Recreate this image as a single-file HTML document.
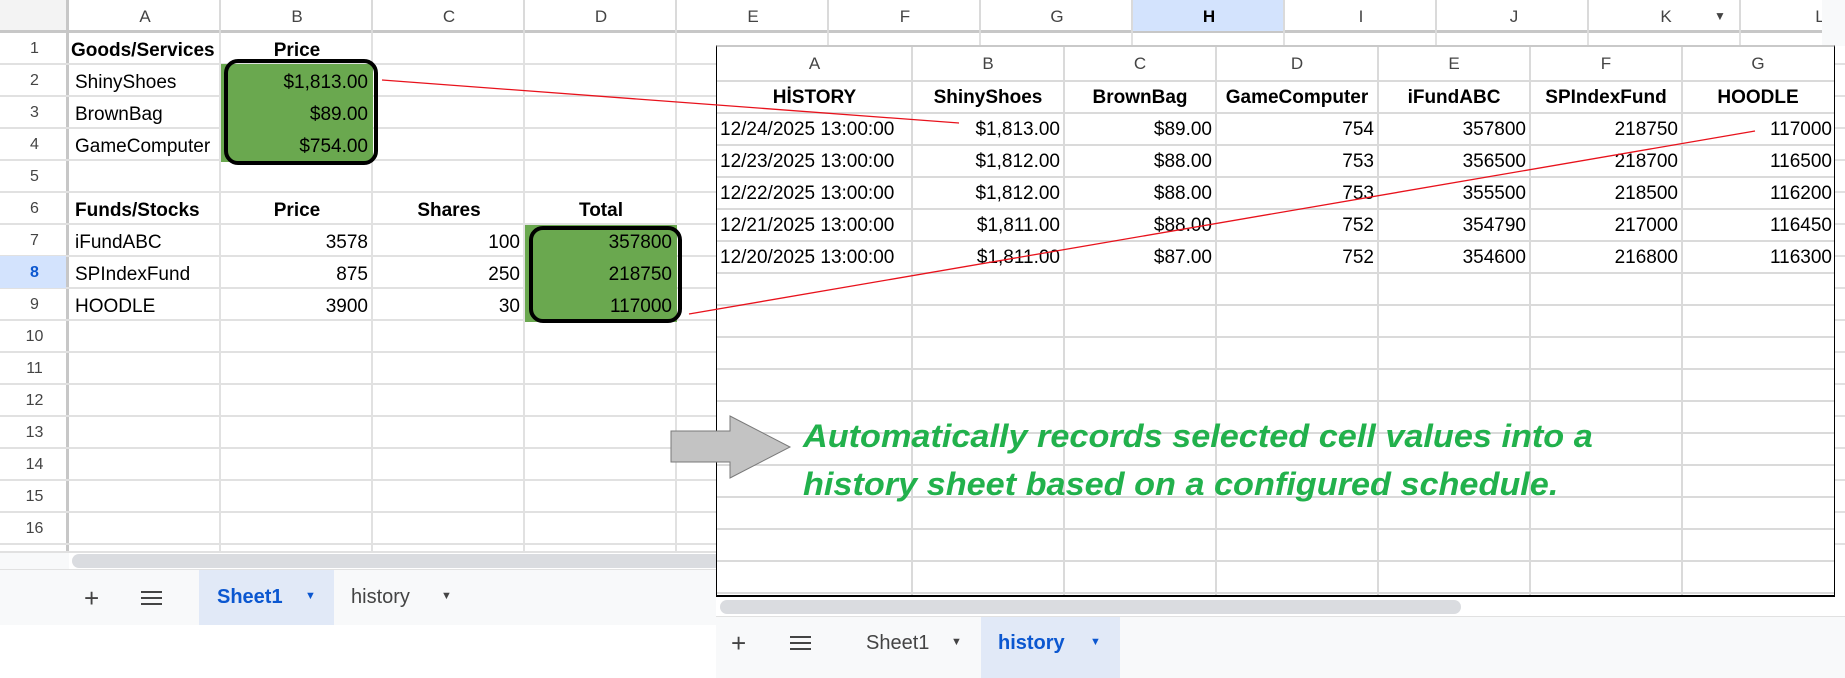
<!DOCTYPE html>
<html><head><meta charset="utf-8">
<style>
*{margin:0;padding:0;box-sizing:border-box}
body{width:1845px;height:678px;position:relative;overflow:hidden;background:#fff;font-family:"Liberation Sans",Arial,sans-serif;color:#000}
.a{position:absolute}
.t{position:absolute;font-size:19px;line-height:32px;white-space:nowrap}
.r{text-align:right}
.c{text-align:center}
.b{font-weight:bold}
.rh{position:absolute;left:0;width:69px;text-align:center;font-size:16px;color:#444;line-height:32px}
.ch{position:absolute;top:0;height:33px;line-height:33px;text-align:center;font-size:17px;color:#444}
</style></head><body>
<div class="a" style="left:0;top:0;width:1845px;height:33px;background:#fff;border-bottom:3px solid #c7c7c7"></div>
<div class="a" style="left:0;top:0;width:66px;height:30px;background:#f3f3f3"></div>
<div class="a" style="left:66px;top:0;width:3px;height:552px;background:#c7c7c7"></div>
<div class="a" style="left:69px;top:0;width:1760px;height:33px;background:repeating-linear-gradient(90deg,transparent 0 150px,#dadada 150px 152px)"></div>
<div class="a" style="left:1133px;top:0;width:150px;height:31px;background:#d3e3fd"></div>
<div class="ch" style="left:69px;width:152px">A</div>
<div class="ch" style="left:221px;width:152px">B</div>
<div class="ch" style="left:373px;width:152px">C</div>
<div class="ch" style="left:525px;width:152px">D</div>
<div class="ch" style="left:677px;width:152px">E</div>
<div class="ch" style="left:829px;width:152px">F</div>
<div class="ch" style="left:981px;width:152px">G</div>
<div class="ch" style="left:1133px;width:152px;color:#000;font-weight:bold">H</div>
<div class="ch" style="left:1285px;width:152px">I</div>
<div class="ch" style="left:1438px;width:152px">J</div>
<div class="ch" style="left:1590px;width:152px">K</div>
<div class="ch" style="left:1710px;width:20px;font-size:12px">&#9660;</div>
<div class="ch" style="left:1810px;width:20px">L</div>
<div class="a" style="left:1822px;top:0;width:23px;height:46px;background:#f8f9fa"></div>
<div class="a" style="left:0;top:33px;width:1845px;height:520px;background:repeating-linear-gradient(180deg,transparent 0 30px,#e1e1e1 30px 32px)"></div>
<div class="a" style="left:69px;top:33px;width:1760px;height:520px;background:repeating-linear-gradient(90deg,transparent 0 150px,#e1e1e1 150px 152px)"></div>
<div class="a" style="left:0;top:256px;width:66px;height:32px;background:#d3e3fd"></div>
<div class="rh" style="top:33px">1</div><div class="rh" style="top:65px">2</div><div class="rh" style="top:97px">3</div><div class="rh" style="top:129px">4</div><div class="rh" style="top:161px">5</div><div class="rh" style="top:193px">6</div><div class="rh" style="top:225px">7</div><div class="rh b" style="top:257px;color:#0b57d0">8</div><div class="rh" style="top:289px">9</div><div class="rh" style="top:321px">10</div><div class="rh" style="top:353px">11</div><div class="rh" style="top:385px">12</div><div class="rh" style="top:417px">13</div><div class="rh" style="top:449px">14</div><div class="rh" style="top:481px">15</div><div class="rh" style="top:513px">16</div>
<div class="a" style="left:221px;top:64px;width:152px;height:98px;background:#6aa84f"></div>
<div class="a" style="left:525px;top:225px;width:152px;height:97px;background:#6aa84f"></div>
<div class="a" style="left:224px;top:59px;width:154px;height:106px;border:4px solid #000;border-radius:14px"></div>
<div class="a" style="left:529px;top:226px;width:153px;height:97px;border:4px solid #000;border-radius:14px"></div>
<div class="t b" style="left:71px;top:35px">Goods/Services</div>
<div class="t b c" style="left:221px;top:35px;width:152px">Price</div>
<div class="t" style="left:75px;top:67px">ShinyShoes</div>
<div class="t" style="left:75px;top:99px">BrownBag</div>
<div class="t" style="left:75px;top:131px">GameComputer</div>
<div class="t r" style="left:221px;top:67px;width:147px">$1,813.00</div>
<div class="t r" style="left:221px;top:99px;width:147px">$89.00</div>
<div class="t r" style="left:221px;top:131px;width:147px">$754.00</div>
<div class="t b" style="left:75px;top:195px">Funds/Stocks</div>
<div class="t b c" style="left:221px;top:195px;width:152px">Price</div>
<div class="t b c" style="left:373px;top:195px;width:152px">Shares</div>
<div class="t b c" style="left:525px;top:195px;width:152px">Total</div>
<div class="t" style="left:75px;top:227px">iFundABC</div>
<div class="t" style="left:75px;top:259px">SPIndexFund</div>
<div class="t" style="left:75px;top:291px">HOODLE</div>
<div class="t r" style="left:221px;top:227px;width:147px">3578</div>
<div class="t r" style="left:221px;top:259px;width:147px">875</div>
<div class="t r" style="left:221px;top:291px;width:147px">3900</div>
<div class="t r" style="left:373px;top:227px;width:147px">100</div>
<div class="t r" style="left:373px;top:259px;width:147px">250</div>
<div class="t r" style="left:373px;top:291px;width:147px">30</div>
<div class="t r" style="left:525px;top:227px;width:147px">357800</div>
<div class="t r" style="left:525px;top:259px;width:147px">218750</div>
<div class="t r" style="left:525px;top:291px;width:147px">117000</div>
<div class="a" style="left:0;top:551px;width:717px;height:19px;background:#fff;border-top:2px solid #e1e1e1"></div>
<div class="a" style="left:0;top:553px;width:69px;height:16px;background:#f8f9fa"></div>
<div class="a" style="left:72px;top:554px;width:650px;height:14px;background:#dadce0;border-radius:7px"></div>
<div class="a" style="left:0;top:569px;width:717px;height:56px;background:#f8f9fa;border-top:1px solid #e1e1e1"></div>
<div class="a" style="left:199px;top:570px;width:135px;height:55px;background:#e1e9f7"></div>
<div class="a" style="left:84px;top:583px;font-size:26px;color:#444">+</div>
<div class="a" style="left:141px;top:591px;width:21px;height:14px;border-top:2px solid #444;border-bottom:2px solid #444"><div style="margin-top:4px;height:2px;background:#444"></div></div>
<div class="a b" style="left:217px;top:586px;font-size:20px;color:#0b57d0">Sheet1</div>
<div class="a" style="left:305px;top:590px;font-size:11px;color:#0b57d0">&#9660;</div>
<div class="a" style="left:351px;top:586px;font-size:20px;color:#444">history</div>
<div class="a" style="left:441px;top:590px;font-size:11px;color:#444">&#9660;</div>
<div class="a" style="left:716px;top:45px;width:1119px;height:552px;background:#fff;border:1px solid #000;border-bottom:2px solid #000;border-top:2px solid #c9c9c9;overflow:hidden">
 <div class="a" style="left:0;top:33px;width:1117px;height:520px;background:repeating-linear-gradient(180deg,#dadada 0 2px,transparent 2px 32px)"></div>
 <div class="a" style="left:0;top:0;width:1117px;height:552px;background:linear-gradient(90deg,transparent 194px,#dadada 194px 196px,transparent 196px 346px,#dadada 346px 348px,transparent 348px 498px,#dadada 498px 500px,transparent 500px 660px,#dadada 660px 662px,transparent 662px 812px,#dadada 812px 814px,transparent 814px 964px,#dadada 964px 966px,transparent 966px)"></div>
 <div style="position:absolute;left:0;top:0;font-size:17px;color:#444;line-height:34px">
  <div class="a c" style="left:0;width:195px">A</div><div class="a c" style="left:195px;width:152px">B</div><div class="a c" style="left:347px;width:152px">C</div><div class="a c" style="left:499px;width:162px">D</div><div class="a c" style="left:661px;width:152px">E</div><div class="a c" style="left:813px;width:152px">F</div><div class="a c" style="left:965px;width:152px">G</div>
 </div>
 <div class="t b c" style="left:0;top:35px;width:195px">HİSTORY</div>
 <div class="t b c" style="left:195px;top:35px;width:152px">ShinyShoes</div>
 <div class="t b c" style="left:347px;top:35px;width:152px">BrownBag</div>
 <div class="t b c" style="left:499px;top:35px;width:162px">GameComputer</div>
 <div class="t b c" style="left:661px;top:35px;width:152px">iFundABC</div>
 <div class="t b c" style="left:813px;top:35px;width:152px">SPIndexFund</div>
 <div class="t b c" style="left:965px;top:35px;width:152px">HOODLE</div>
 <div class="t" style="left:3px;top:67px;line-height:32px">12/24/2025 13:00:00<br>12/23/2025 13:00:00<br>12/22/2025 13:00:00<br>12/21/2025 13:00:00<br>12/20/2025 13:00:00</div>
 <div class="t r" style="left:195px;top:67px;width:148px">$1,813.00<br>$1,812.00<br>$1,812.00<br>$1,811.00<br>$1,811.00</div>
 <div class="t r" style="left:347px;top:67px;width:148px">$89.00<br>$88.00<br>$88.00<br>$88.00<br>$87.00</div>
 <div class="t r" style="left:499px;top:67px;width:158px">754<br>753<br>753<br>752<br>752</div>
 <div class="t r" style="left:661px;top:67px;width:148px">357800<br>356500<br>355500<br>354790<br>354600</div>
 <div class="t r" style="left:813px;top:67px;width:148px">218750<br>218700<br>218500<br>217000<br>216800</div>
 <div class="t r" style="left:965px;top:67px;width:150px">117000<br>116500<br>116200<br>116450<br>116300</div>
</div>
<div class="a" style="left:716px;top:597px;width:1129px;height:19px;background:#fff"></div>
<div class="a" style="left:720px;top:600px;width:741px;height:14px;background:#dadce0;border-radius:7px"></div>
<div class="a" style="left:716px;top:616px;width:1129px;height:62px;background:#f8f9fa;border-top:1px solid #e1e1e1"></div>
<div class="a" style="left:981px;top:617px;width:139px;height:61px;background:#e1e9f7"></div>
<div class="a" style="left:731px;top:628px;font-size:26px;color:#444">+</div>
<div class="a" style="left:790px;top:636px;width:21px;height:14px;border-top:2px solid #444;border-bottom:2px solid #444"><div style="margin-top:4px;height:2px;background:#444"></div></div>
<div class="a" style="left:866px;top:632px;font-size:20px;color:#444">Sheet1</div>
<div class="a" style="left:951px;top:636px;font-size:11px;color:#444">&#9660;</div>
<div class="a b" style="left:998px;top:632px;font-size:20px;color:#0b57d0">history</div>
<div class="a" style="left:1090px;top:636px;font-size:11px;color:#0b57d0">&#9660;</div>
<svg class="a" style="left:0;top:0" width="1845" height="678">
 <polygon points="671,431 730,431 730,416 790,447 730,478 730,462 671,462" fill="#c3c3c3" stroke="#7a7a7a" stroke-width="1"/>
 <line x1="382" y1="80" x2="959" y2="123" stroke="#e8121c" stroke-width="1.3"/>
 <line x1="689" y1="314" x2="1755" y2="131" stroke="#e8121c" stroke-width="1.3"/>
</svg>
<div class="a" style="left:803px;top:412px;font-size:32px;line-height:48px;font-weight:bold;font-style:italic;color:#22b14c;white-space:nowrap;transform:scaleX(1.07);transform-origin:0 0">Automatically records selected cell values into a<br>history sheet based on a configured schedule.</div>
</body></html>
